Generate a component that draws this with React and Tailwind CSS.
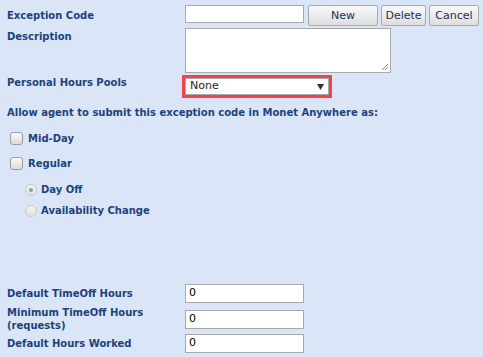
const LABEL = 'text-[10px] font-bold text-[#1b4379] leading-[13px]';
const FONT = { fontFamily: '"DejaVu Sans", Verdana, sans-serif' };

function Btn({ children, className }) {
    return (
        <button
            className={`h-[21px] border border-[#a9a9a9] rounded-[2px] bg-gradient-to-b from-[#fafafa] to-[#dedede] text-[11px] text-[#1b2f55] leading-none ${className}`}
        >
            {children}
        </button>
    );
}

function Box({ children, className }) {
    return (
        <div className={`w-[119px] h-[19px] bg-white border border-[#a9a9a9] text-[11px] text-black pl-[3px] flex items-center ${className || ''}`}>
            {children}
        </div>
    );
}

function Check() {
    return <span className="block w-[13px] h-[13px] border border-[#9c9c9c] rounded-[3px] bg-gradient-to-b from-[#fbfbfb] to-[#dcdcdc]" />;
}

function Radio({ checked }) {
    return (
        <span className="w-[12px] h-[12px] rounded-full border border-[#c9c9c9] bg-gradient-to-b from-[#f4f4f4] to-[#e2e2e2] flex items-center justify-center">
            {checked && <span className="w-[4px] h-[4px] rounded-full bg-[#9a9a9a]" />}
        </span>
    );
}

export default function App() {
    return (
        <div className="w-[483px] h-[357px] bg-[#dbe5f8] pl-[7px] pt-[5px] overflow-hidden" style={FONT}>
            {/* Exception Code */}
            <div className="flex items-start">
                <div className={`${LABEL} w-[178px] pt-[4px]`}>Exception Code</div>
                <div className="w-[119px] h-[18px] bg-white border border-[#a9a9a9]" />
                <Btn className="ml-[4px] w-[70px]">New</Btn>
                <Btn className="ml-[3px] w-[45px]">Delete</Btn>
                <Btn className="ml-[3px] w-[50px]">Cancel</Btn>
            </div>

            {/* Description */}
            <div className="flex items-start mt-[2px]">
                <div className={`${LABEL} w-[178px] pt-[2px]`}>Description</div>
                <div className="relative w-[206px] h-[45px] bg-white border border-[#a9a9a9]">
                    <svg className="absolute right-[1px] bottom-[1px]" width="8" height="8" viewBox="0 0 8 8">
                        <path d="M7 1L1 7M7 4L4 7" stroke="#8a8a8a" strokeWidth="1" />
                    </svg>
                </div>
            </div>

            {/* Personal Hours Pools */}
            <div className="flex items-start mt-[2px]">
                <div className={`${LABEL} w-[175px] pt-[1px]`}>Personal Hours Pools</div>
                <div className="border-[3px] border-[#f2434b]">
                    <div className="w-[144px] h-[17px] bg-white border border-[#a9a9a9] flex items-center justify-between pl-[4px] pr-[4px] text-[11px] text-[#222]">
                        <span>None</span>
                        <svg width="7" height="6" viewBox="0 0 7 6">
                            <path d="M0 0H7L3.5 6Z" fill="#333" />
                        </svg>
                    </div>
                </div>
            </div>

            <div className={`${LABEL} mt-[8px]`}>Allow agent to submit this exception code in Monet Anywhere as:</div>

            {/* Options */}
            <div className="flex items-center mt-[13px] ml-[3px]">
                <Check />
                <span className={`${LABEL} ml-[5px]`}>Mid-Day</span>
            </div>
            <div className="flex items-center mt-[12px] ml-[3px]">
                <Check />
                <span className={`${LABEL} ml-[5px]`}>Regular</span>
            </div>
            <div className="flex items-center mt-[13px] ml-[18px]">
                <Radio checked />
                <span className={`${LABEL} ml-[4px]`}>Day Off</span>
            </div>
            <div className="flex items-center mt-[8px] ml-[18px]">
                <Radio />
                <span className={`${LABEL} ml-[4px]`}>Availability Change</span>
            </div>

            {/* Hours */}
            <div className="flex items-center mt-[67px]">
                <div className={`${LABEL} w-[178px]`}>Default TimeOff Hours</div>
                <Box>0</Box>
            </div>
            <div className="flex items-center mt-[3px]">
                <div className={`${LABEL} w-[178px]`}>Minimum TimeOff Hours<br />(requests)</div>
                <Box>0</Box>
            </div>
            <div className="flex items-center mt-[2px]">
                <div className={`${LABEL} w-[178px]`}>Default Hours Worked</div>
                <Box>0</Box>
            </div>
        </div>
    );
}
